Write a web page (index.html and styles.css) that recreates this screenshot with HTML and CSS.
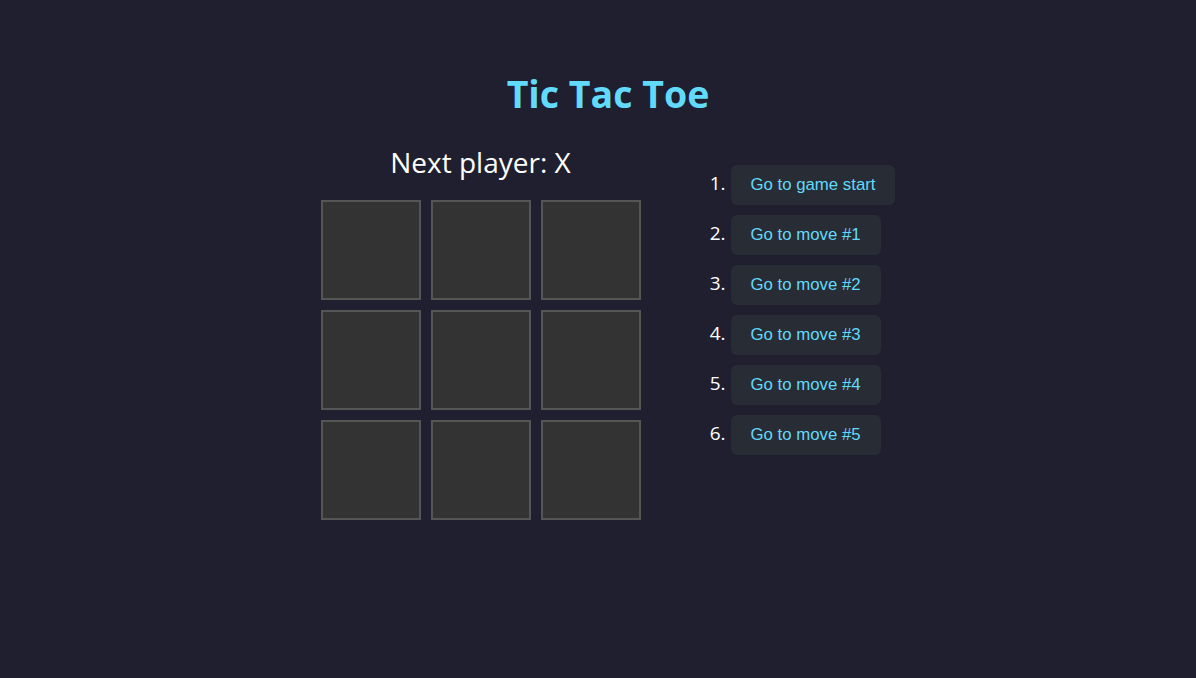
FILE: index.html
```html
<!DOCTYPE html>
<html lang="en">
<head>
<meta charset="utf-8">
<title>Tic Tac Toe</title>
<link rel="stylesheet" href="styles.css">
</head>
<body>
<div class="app">
  <h1 class="title">Tic Tac Toe</h1>
  <div class="game">
    <div class="game-board">
      <div class="status">Next player: X</div>
      <div class="board">
        <button class="square"></button>
        <button class="square"></button>
        <button class="square"></button>
        <button class="square"></button>
        <button class="square"></button>
        <button class="square"></button>
        <button class="square"></button>
        <button class="square"></button>
        <button class="square"></button>
      </div>
    </div>
    <div class="game-info">
      <ol class="moves">
        <li><button class="move">Go to game start</button></li>
        <li><button class="move">Go to move #1</button></li>
        <li><button class="move">Go to move #2</button></li>
        <li><button class="move">Go to move #3</button></li>
        <li><button class="move">Go to move #4</button></li>
        <li><button class="move">Go to move #5</button></li>
      </ol>
    </div>
  </div>
</div>
</body>
</html>
```
FILE: styles.css
```css
html, body {
  margin: 0;
  padding: 0;
  background: #1f1f2f;
  height: 100%;
}
body {
  font-family: "Open Sans", "Noto Sans", sans-serif;
  color: #ffffff;
}
.app {
  padding: 68px 0 0 20px;
  display: flex;
  flex-direction: column;
  align-items: center;
}
.title {
  margin: 0 0 24px 0;
  font-size: 37.5px;
  font-weight: 700;
  line-height: 52px;
  color: #61dafb;
}
.game {
  display: flex;
  gap: 50px;
  align-items: flex-start;
}
.game-board {
  display: flex;
  flex-direction: column;
  align-items: center;
}
.status {
  font-size: 28px;
  line-height: 36px;
  margin-bottom: 20px;
}
.board {
  display: grid;
  grid-template-columns: repeat(3, 100px);
  grid-auto-rows: 100px;
  gap: 10px;
}
.square {
  background: #333333;
  border: 2px solid #555555;
  margin: 0;
  padding: 0;
}
.game-info {
  padding-top: 21px;
}
.moves {
  margin: 0;
  padding-left: 40px;
  font-size: 19px;
}
.moves li {
  margin-bottom: 10px;
}
.moves li::marker {
  color: #ffffff;
}
.move {
  font-family: "Liberation Sans", Arial, sans-serif;
  font-size: 16.8px;
  color: #61dafb;
  background: #282c34;
  border: none;
  border-radius: 6px;
  height: 40px;
  padding: 0 20px;
  margin: 0;
  vertical-align: middle;
}
```
